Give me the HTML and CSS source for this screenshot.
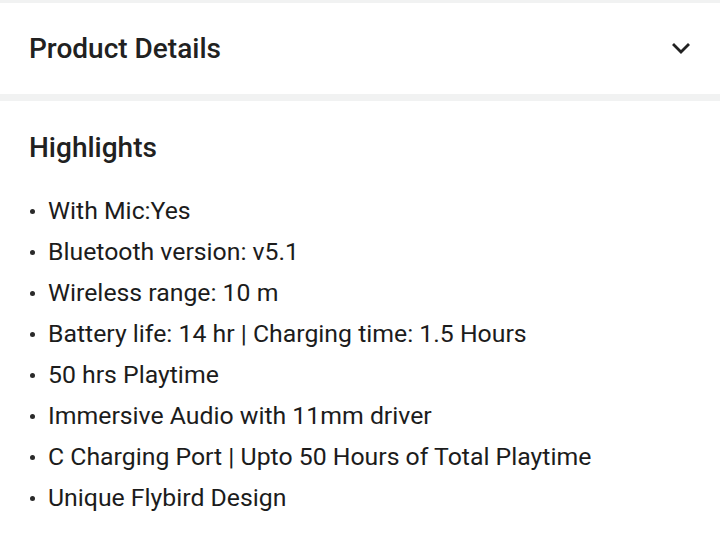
FILE: index.html
```html
<!DOCTYPE html>
<html>
<head>
<meta charset="utf-8">
<link rel="stylesheet" href="styles.css">
</head>
<body>
<div class="band band-top"></div>
<div class="header">
  <h2 class="title">Product Details</h2>
  <svg class="chev" width="18" height="14" viewBox="0 0 18 14"><path d="M2 3 L9 10 L16 3" fill="none" stroke="#212121" stroke-width="2.8" stroke-linecap="square"/></svg>
</div>
<div class="band band-mid"></div>
<div class="section">
  <h3 class="subtitle">Highlights</h3>
  <ul class="list">
    <li>With Mic:Yes</li>
    <li>Bluetooth version: v5.1</li>
    <li>Wireless range: 10 m</li>
    <li>Battery life: 14 hr | Charging time: 1.5 Hours</li>
    <li>50 hrs Playtime</li>
    <li>Immersive Audio with 11mm driver</li>
    <li>C Charging Port | Upto 50 Hours of Total Playtime</li>
    <li>Unique Flybird Design</li>
  </ul>
</div>
</body>
</html>
```
FILE: styles.css
```css
html, body { margin: 0; padding: 0; background: #fff; }
body { font-family: Roboto, "Noto Sans", sans-serif; color: #212121; width: 720px; }
.band { background: #f1f2f2; }
.band-top { height: 3px; }
.band-mid { height: 7px; }
.header { height: 91px; display: flex; align-items: center; justify-content: space-between; padding: 0 30px 0 29px; box-sizing: border-box; }
.title { margin: 0; font-size: 28px; font-weight: 500; letter-spacing: 0; }
.chev { display: block; margin-top: 1px; }
.section { padding: 27px 29px 0 29px; }
.subtitle { margin: 0; font-size: 28px; font-weight: 500; line-height: 40px; }
.list { list-style: none; margin: 22px 0 0 0; padding: 0; }
.list li { position: relative; padding-left: 19px; font-size: 24.8px; line-height: 41px; color: #1c1c1c; }
.list li::before { content: ""; position: absolute; left: 1px; top: 19px; width: 5px; height: 5px; border-radius: 50%; background: #2a2a2a; }
```
